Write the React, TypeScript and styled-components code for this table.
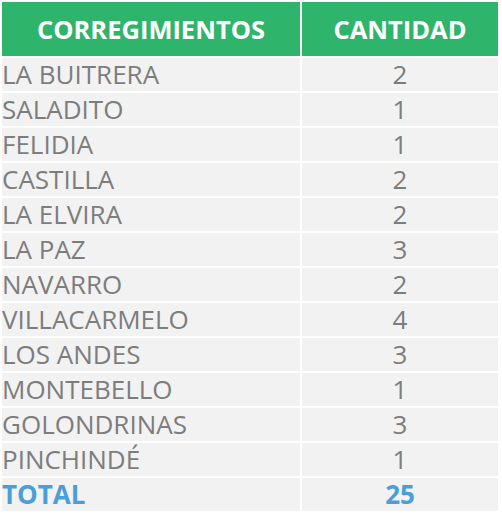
import React from "react";
import styled, { createGlobalStyle } from "styled-components";

const Global = createGlobalStyle`
  html, body { margin: 0; padding: 0; background: #ffffff; }
  body { font-family: "Open Sans", "Liberation Sans", sans-serif; }
`;

const Table = styled.table`
  border-collapse: separate;
  border-spacing: 2px;
  width: 500px;
  table-layout: fixed;
`;

const HeadCell = styled.th<{ $w: number }>`
  width: ${(p) => p.$w}px;
  height: 54px;
  padding: 0;
  background: #2fb46c;
  color: #ffffff;
  font-weight: 700;
  font-size: 25.5px;
  line-height: 54px;
  text-align: center;
  vertical-align: middle;
  white-space: nowrap;
`;

const Cell = styled.td<{ $align: "left" | "center"; $total?: boolean }>`
  height: 33px;
  padding: 0;
  background: #f2f2f2;
  color: ${(p) => (p.$total ? "#4a9fd6" : "#7d7d7d")};
  font-weight: ${(p) => (p.$total ? 700 : 400)};
  font-size: 26px;
  text-align: ${(p) => p.$align};
  vertical-align: middle;
  line-height: 33px;
  white-space: nowrap;
`;

const rows: [string, number][] = [
  ["LA BUITRERA", 2],
  ["SALADITO", 1],
  ["FELIDIA", 1],
  ["CASTILLA", 2],
  ["LA ELVIRA", 2],
  ["LA PAZ", 3],
  ["NAVARRO", 2],
  ["VILLACARMELO", 4],
  ["LOS ANDES", 3],
  ["MONTEBELLO", 1],
  ["GOLONDRINAS", 3],
  ["PINCHINDÉ", 1],
];

export default function App() {
  const total = rows.reduce((s, r) => s + r[1], 0);
  return (
    <>
      <Global />
      <Table>
        <thead>
          <tr>
            <HeadCell $w={298}>CORREGIMIENTOS</HeadCell>
            <HeadCell $w={196}>CANTIDAD</HeadCell>
          </tr>
        </thead>
        <tbody>
          {rows.map(([n, c]) => (
            <tr key={n}>
              <Cell $align="left">{n}</Cell>
              <Cell $align="center">{c}</Cell>
            </tr>
          ))}
          <tr>
            <Cell $align="left" $total>TOTAL</Cell>
            <Cell $align="center" $total>{total}</Cell>
          </tr>
        </tbody>
      </Table>
    </>
  );
}
